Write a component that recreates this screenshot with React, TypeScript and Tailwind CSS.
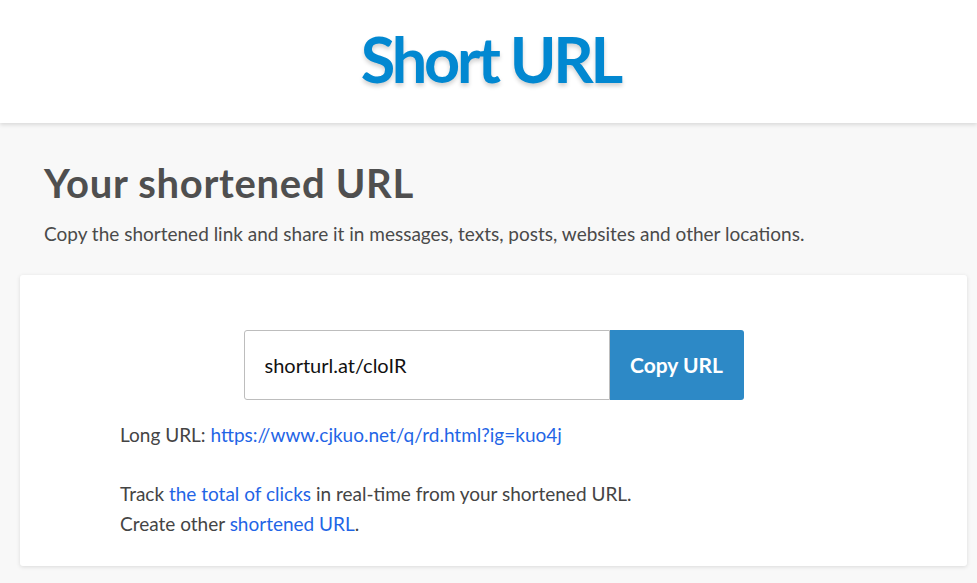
export default function App() {
  const sans = "font-['Lato','Noto_Sans',sans-serif]";
  return (
    <div className={`min-h-[583px] bg-[#f8f8f8] ${sans}`}>
      <header className="flex h-[123px] items-center justify-center bg-white pb-[6px] pl-[4px] shadow-[0_2px_4px_rgba(0,0,0,0.12)]">
        <h1 className="text-[63px] font-bold leading-none tracking-[-3.2px] text-[#0288d1] [text-shadow:0_3px_4px_rgba(0,0,0,0.18)]">
          Short URL
        </h1>
      </header>

      <main className="ml-5 mr-[10px] pt-[36px]">
        <div className="px-6">
          <h2 className="text-[40px] font-bold leading-[48px] tracking-[0.7px] text-[#4f4f4f]">Your shortened URL</h2>
          <p className="mt-[14px] text-[19px] leading-[26px] text-[#4a4a4a]">
            Copy the shortened link and share it in messages, texts, posts, websites and other locations.
          </p>
        </div>

        <section className="mt-[28px] rounded-[3px] bg-white px-[100px] pb-[27px] pt-[55px] shadow-[0_1px_4px_rgba(0,0,0,0.12)]">
          <div className="flex justify-center">
            <input
              readOnly
              value="shorturl.at/cloIR"
              className="h-[70px] w-[366px] rounded-l-[3px] border border-[#bdbdbd] px-5 text-[20px] text-[#111] outline-none"
            />
            <button
              type="button"
              className="h-[70px] w-[134px] rounded-r-[3px] bg-[#2d89c6] text-[21px] font-bold text-white"
            >
              Copy URL
            </button>
          </div>

          <div className="mt-[20px] text-[19px] leading-[30px] text-[#444]">
            <p>
              Long URL:{" "}
              <a href="#" className="text-[#1f65e6]">
                https://www.cjkuo.net/q/rd.html?ig=kuo4j
              </a>
            </p>
            <p className="mt-[29px]">
              Track{" "}
              <a href="#" className="text-[#1f65e6]">
                the total of clicks
              </a>{" "}
              in real-time from your shortened URL.
            </p>
            <p>
              Create other{" "}
              <a href="#" className="text-[#1f65e6]">
                shortened URL
              </a>
              .
            </p>
          </div>
        </section>
      </main>
    </div>
  );
}
